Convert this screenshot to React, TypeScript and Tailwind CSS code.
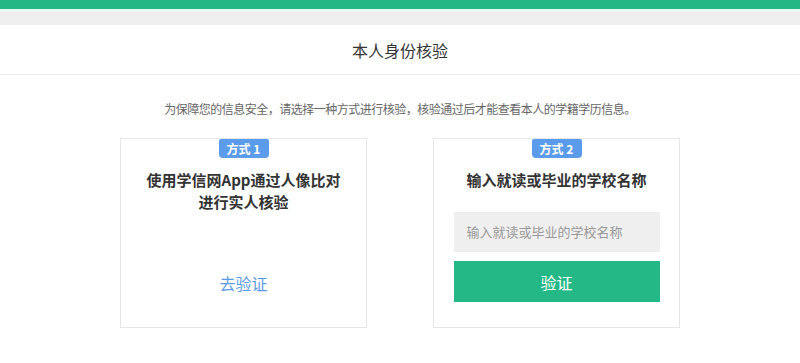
import type { ReactNode } from 'react';

const font = { fontFamily: '"Noto Sans CJK SC", "Noto Sans", sans-serif' };

const Badge = ({ n }: { n: number }) => (
  <div className="mx-auto flex h-[19px] w-[50px] items-center justify-center rounded-b-[4px] rounded-t-[2px] bg-[#5b9bec] text-[12px] font-bold text-white">
    方式 {n}
  </div>
);

const Card = ({ n, children }: { n: number; children: ReactNode }) => (
  <div className="flex h-[190px] w-[247px] flex-col border border-[#e6e6e6] bg-white">
    <Badge n={n} />
    {children}
  </div>
);

export default function App() {
  return (
    <div className="h-[363px] w-[800px] overflow-hidden bg-white" style={font}>
      {/* top bars */}
      <div className="h-[9px] bg-[#23b785]" />
      <div className="h-[3px] bg-[#e6faf3]" />
      <div className="h-px bg-[#f6e6e8]" />
      <div className="h-[12px] bg-[#efefef]" />

      {/* title */}
      <div className="flex h-[50px] items-center justify-center border-b border-[#eeeeee] pt-px text-[16px] text-[#333]">
        本人身份核验
      </div>

      <p className="mt-[26px] text-center text-[12px] leading-[16px] tracking-[-0.5px] text-[#666]">
        为保障您的信息安全，请选择一种方式进行核验，核验通过后才能查看本人的学籍学历信息。
      </p>

      <div className="mt-[21px] flex justify-center gap-[66px]">
        <Card n={1}>
          <h3 className="mt-[11px] px-3 text-center text-[15px] font-bold leading-[22px] text-[#333]">
            使用学信网App通过人像比对
            <br />
            进行实人核验
          </h3>
          <a className="mt-[58px] text-center text-[16px] leading-[24px] text-[#5c9be2]">去验证</a>
        </Card>

        <Card n={2}>
          <h3 className="mt-[11px] text-center text-[15px] font-bold leading-[22px] text-[#333]">
            输入就读或毕业的学校名称
          </h3>
          <div className="mx-auto mt-[21px] flex h-[40px] w-[206px] items-center bg-[#efefef] pl-[13px] text-[13px] text-[#999]">
            输入就读或毕业的学校名称
          </div>
          <button className="mx-auto mt-[9px] flex h-[41px] w-[206px] items-center justify-center bg-[#25b887] text-[16px] text-white">
            验证
          </button>
        </Card>
      </div>
    </div>
  );
}
